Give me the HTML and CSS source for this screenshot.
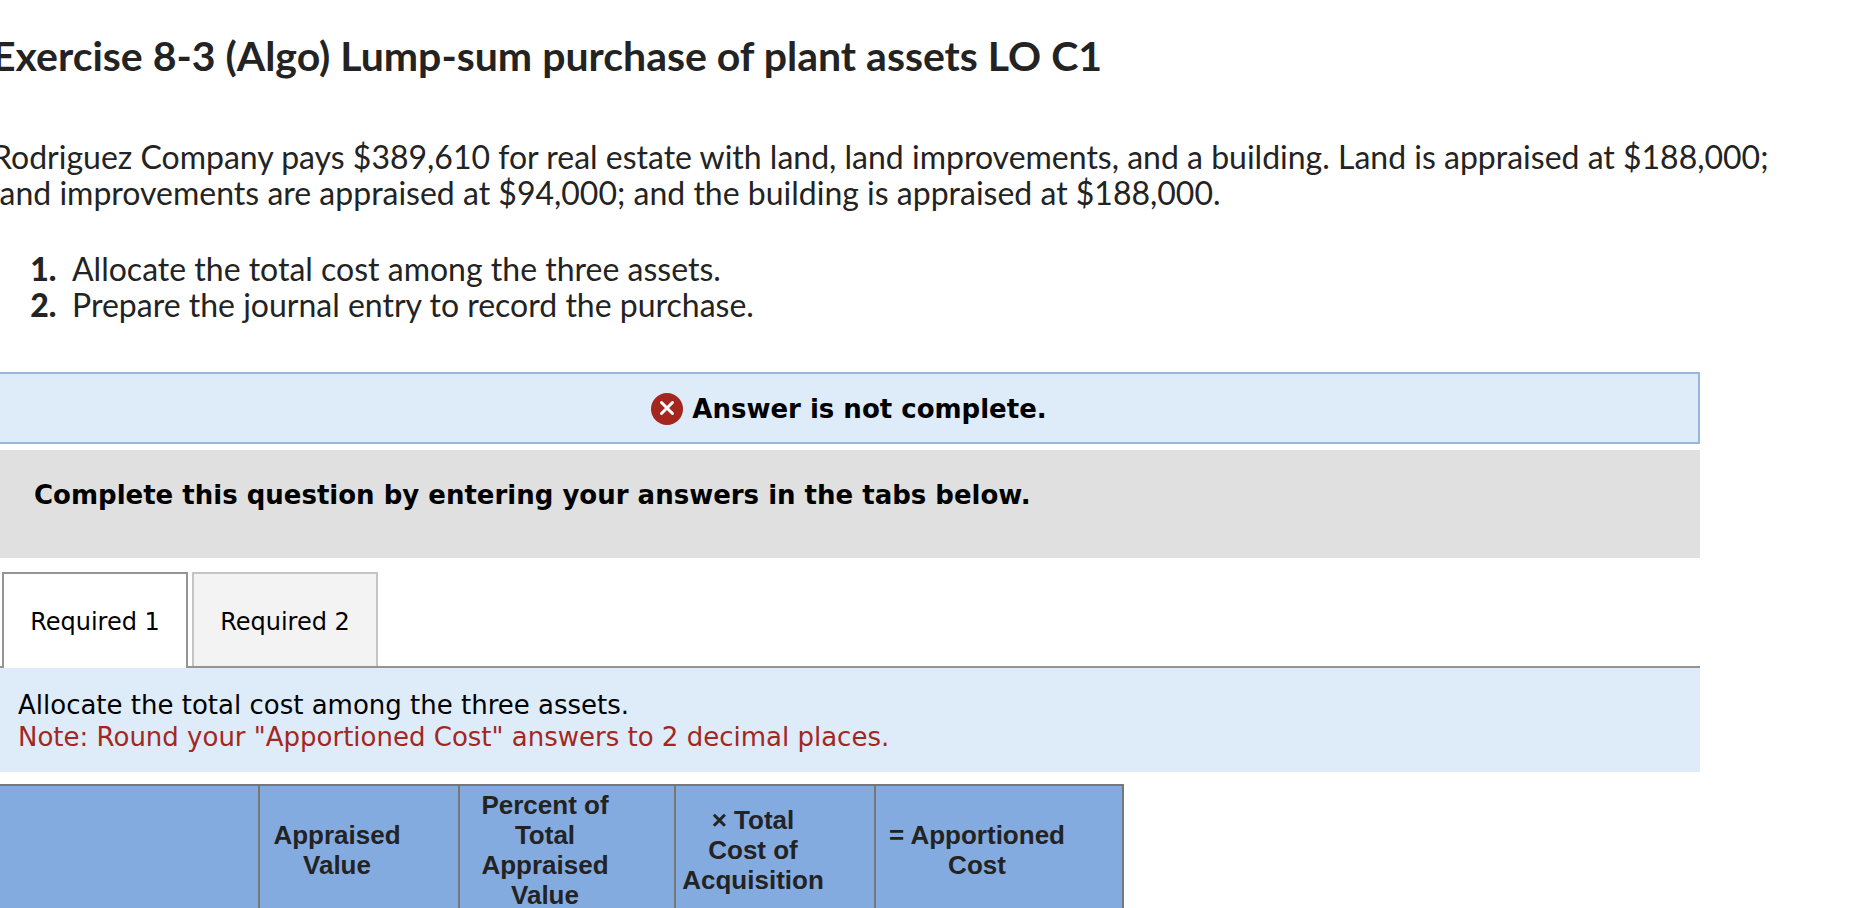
FILE: index.html
```html
<!DOCTYPE html>
<html lang="en">
<head>
<meta charset="utf-8">
<title>Exercise 8-3</title>
<link rel="stylesheet" href="styles.css">
</head>
<body>
<main class="exercise">
  <header class="intro">
    <h1 class="title">Exercise 8-3 (Algo) Lump-sum purchase of plant assets LO C1</h1>
    <p class="problem">Rodriguez Company pays $389,610 for real estate with land, land improvements, and a building. Land is appraised at $188,000;<br>land improvements are appraised at $94,000; and the building is appraised at $188,000.</p>
    <ol class="tasks">
      <li>Allocate the total cost among the three assets.</li>
      <li>Prepare the journal entry to record the purchase.</li>
    </ol>
  </header>
  <section class="worksheet">
    <div class="status">
      <svg class="status-icon" viewBox="0 0 32 32" aria-hidden="true">
        <circle cx="16" cy="16" r="16" fill="#a3271f"/>
        <path d="M10.5 9.5 L21.5 20.5 M21.5 9.5 L10.5 20.5" stroke="#fff" stroke-width="3" stroke-linecap="round"/>
      </svg>
      <span>Answer is not complete.</span>
    </div>
    <p class="directions">Complete this question by entering your answers in the tabs below.</p>
    <div class="tabs" role="tablist">
      <button class="tab tab-active" type="button" role="tab" aria-selected="true">Required 1</button>
      <button class="tab" type="button" role="tab" aria-selected="false">Required 2</button>
    </div>
    <div class="requirement">
      <p>Allocate the total cost among the three assets.</p>
      <p class="note">Note: Round your "Apportioned Cost" answers to 2 decimal places.</p>
    </div>
    <table class="allocation">
      <colgroup>
        <col class="col-name"><col class="col-value"><col class="col-percent"><col class="col-value"><col class="col-cost">
      </colgroup>
      <thead>
        <tr>
          <td></td>
          <th scope="col">Appraised Value</th>
          <th scope="col">Percent of<br>Total Appraised Value</th>
          <th scope="col">× Total<br>Cost of Acquisition</th>
          <th scope="col">= Apportioned Cost</th>
        </tr>
      </thead>
    </table>
  </section>
</main>
</body>
</html>
```
FILE: styles.css
```css
* {
  box-sizing: border-box;
}

body {
  margin: 0;
  background: #fff;
  color: #000;
  font-family: "DejaVu Sans", Verdana, sans-serif;
  font-size: 26px;
  line-height: 32px;
  overflow: hidden;
}

p {
  margin: 0;
}

/* The content column starts slightly outside the window. */
.exercise {
  margin-left: -8px;
}

.intro {
  color: #232323;
  font-family: Lato, sans-serif;
  font-size: 32px;
  line-height: 36px;
}

.title {
  margin: 0;
  padding-top: 33px;
  font-size: 41px;
  line-height: 46px;
  font-weight: 700;
}

.problem {
  margin-top: 60px;
  white-space: nowrap;
}

.tasks {
  margin: 40px 0 0;
  padding-left: 72px;
}

.tasks li {
  padding-left: 8px;
}

.tasks li::marker {
  font-weight: 900;
}

.worksheet {
  margin-top: 49px;
  margin-right: 160px;
}

.status {
  display: flex;
  align-items: center;
  justify-content: center;
  gap: 9px;
  padding: 19px 0 17px 6px;
  border: 2px solid #97b6de;
  background: #deebf9;
  font-weight: 700;
}

.status-icon {
  width: 32px;
  height: 32px;
}

.directions {
  margin-top: 6px;
  padding: 29px 42px 47px;
  background: #e0e0e0;
  font-weight: 700;
}

.tabs {
  display: flex;
  gap: 4px;
  margin-top: 14px;
  padding-left: 10px;
  border-bottom: 2px solid #949494;
}

.tab {
  height: 94px;
  min-width: 186px;
  padding: 4px 24px 0;
  border: 2px solid #c4c4c4;
  border-bottom: 0;
  background: #f3f3f3;
  color: #000;
  font: inherit;
  font-size: 24px;
}

.tab-active {
  height: 96px;
  margin-bottom: -2px;
  padding-top: 2px;
  border-color: #949494;
  background: #fff;
}

.requirement {
  padding: 21px 26px 19px;
  background: #deebf9;
}

.note {
  color: #a3271f;
}

.allocation {
  margin-top: 12px;
  border-collapse: collapse;
  table-layout: fixed;
  width: 1132px;
  background: #84abe0;
  color: #232323;
  font-family: "Liberation Sans", Arial, sans-serif;
  font-size: 26px;
  line-height: 30px;
}

.allocation th,
.allocation td {
  padding: 4px 48px 2px 4px;
  border: 2px solid #777;
}

.col-name {
  width: 266px;
}

.col-value {
  width: 200px;
}

.col-percent {
  width: 216px;
}

.col-cost {
  width: 248px;
}
```
